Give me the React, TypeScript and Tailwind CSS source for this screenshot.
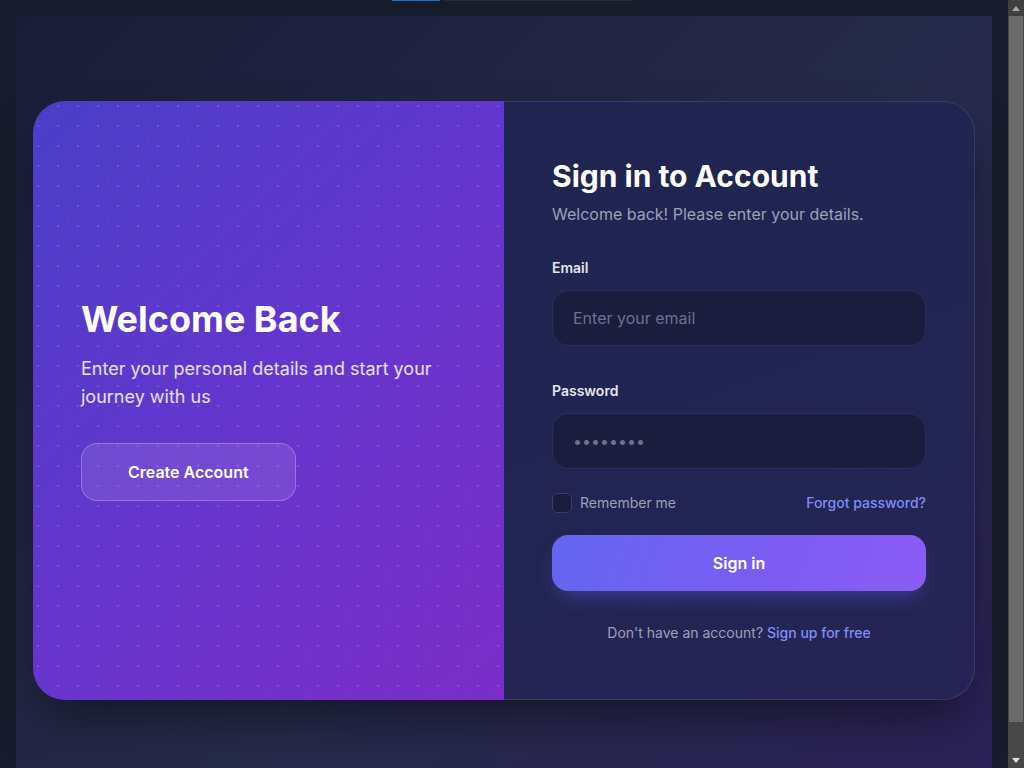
import { useState } from "react";

const ScrollBar = () => (
  <aside className="sticky top-0 flex h-screen w-4 shrink-0 flex-col bg-[#474747]">
    <div className="flex h-4 items-center justify-center bg-[#3f3f3f]">
      <svg width="8" height="5" viewBox="0 0 8 5">
        <path d="M4 0 L8 5 L0 5 Z" fill="#a8a8a8" />
      </svg>
    </div>
    <div className="flex-1 px-px">
      <div className="h-[706px] w-full bg-[#6b6b6b]" />
    </div>
    <div className="flex h-4 items-center justify-center">
      <svg width="8" height="5" viewBox="0 0 8 5">
        <path d="M0 0 L8 0 L4 5 Z" fill="#e0e0e0" />
      </svg>
    </div>
  </aside>
);

const App = () => {
  const [email, setEmail] = useState("");
  const [password, setPassword] = useState("");
  const [remember, setRemember] = useState(false);

  return (
    <div className="flex font-['Inter',_'Noto_Sans',_sans-serif]">
      <main className="relative min-w-0 flex-1 bg-[#161c2b] p-4">
        {/* thin strip at the very top */}
        <div className="absolute left-[392px] top-0 flex h-px gap-1">
          <div className="h-px w-12 bg-[#0a78d8]" />
          <div className="h-px w-[188px] bg-[#2a2a2c]" />
        </div>

        <div className="flex min-h-screen items-center justify-center bg-[linear-gradient(135deg,#1b1d38_0%,#262a4a_55%,#2b2157_100%)] px-[17px]">
          <div className="grid w-full max-w-[942px] grid-cols-2 rounded-[32px] shadow-[0_25px_50px_-12px_rgba(0,0,0,0.5)]">
            {/* Left panel */}
            <section className="relative flex flex-col justify-center overflow-hidden rounded-l-[32px] bg-[linear-gradient(135deg,#4a3fc9_0%,#6535cd_50%,#7b2dc8_100%)] p-12">
              <div className="pointer-events-none absolute inset-0 bg-[radial-gradient(circle,rgba(255,255,255,0.12)_1px,transparent_1.5px)] bg-[length:20px_20px] bg-[position:-5px_-5px]" />
              <div className="pointer-events-none absolute inset-0 bg-[radial-gradient(circle,rgba(255,255,255,0.07)_1px,transparent_1.5px)] bg-[length:40px_40px] bg-[position:15px_15px]" />
              <div className="relative">
                <h1 className="text-4xl font-bold text-white">Welcome Back</h1>
                <p className="mt-4 max-w-sm text-lg leading-7 text-white/85">
                  Enter your personal details and start your journey with us
                </p>
                <button
                  type="button"
                  className="mt-8 rounded-2xl border border-white/25 bg-white/10 px-[46px] py-4 text-base font-semibold text-white"
                >
                  Create Account
                </button>
              </div>
            </section>

            {/* Right panel */}
            <section className="flex flex-col justify-center rounded-r-[32px] border-y border-r border-white/10 bg-[linear-gradient(160deg,#1f2450_0%,#222552_60%,#262456_100%)] px-12 py-14">
              <h2 className="text-3xl font-bold text-white">Sign in to Account</h2>
              <p className="mt-2 text-base text-[#9ca0b9]">
                Welcome back! Please enter your details.
              </p>

              <label className="mt-8 mb-3 block text-sm font-semibold text-[#e4e6ee]">
                Email
              </label>
              <input
                type="email"
                value={email}
                onChange={(e) => setEmail(e.target.value)}
                placeholder="Enter your email"
                className="h-14 w-full rounded-2xl border border-[#2b2f60] bg-[#1a1d3d] px-5 text-base text-white placeholder:text-[#6c7191] focus:outline-none"
              />

              <label className="mt-[35px] mb-3 block text-sm font-semibold text-[#e4e6ee]">
                Password
              </label>
              <input
                type="password"
                value={password}
                onChange={(e) => setPassword(e.target.value)}
                placeholder="••••••••"
                className="h-14 w-full rounded-2xl border border-[#2b2f60] bg-[#1a1d3d] px-5 text-base text-white placeholder:text-[#6c7191] focus:outline-none"
              />

              <div className="mt-6 flex items-center justify-between">
                <label className="flex items-center gap-2 text-sm text-[#9ca0b9]">
                  <input
                    type="checkbox"
                    checked={remember}
                    onChange={(e) => setRemember(e.target.checked)}
                    className="h-5 w-5 appearance-none rounded-[5px] border border-[#3b405f] bg-[#1a1d3d]"
                  />
                  Remember me
                </label>
                <a href="#" className="text-sm font-medium text-[#818cf8]">
                  Forgot password?
                </a>
              </div>

              <button
                type="button"
                className="mt-[22px] h-14 w-full rounded-2xl bg-[linear-gradient(110deg,#6366f1_0%,#7c5cf2_60%,#8b5cf6_100%)] text-base font-semibold text-white shadow-[0_10px_20px_-6px_rgba(99,102,241,0.4)]"
              >
                Sign in
              </button>

              <p className="mt-8 text-center text-sm text-[#9ca0b9]">
                Don't have an account?{" "}
                <a href="#" className="font-medium text-[#818cf8]">
                  Sign up for free
                </a>
              </p>
            </section>
          </div>
        </div>
      </main>
      <ScrollBar />
    </div>
  );
};

export default App;
